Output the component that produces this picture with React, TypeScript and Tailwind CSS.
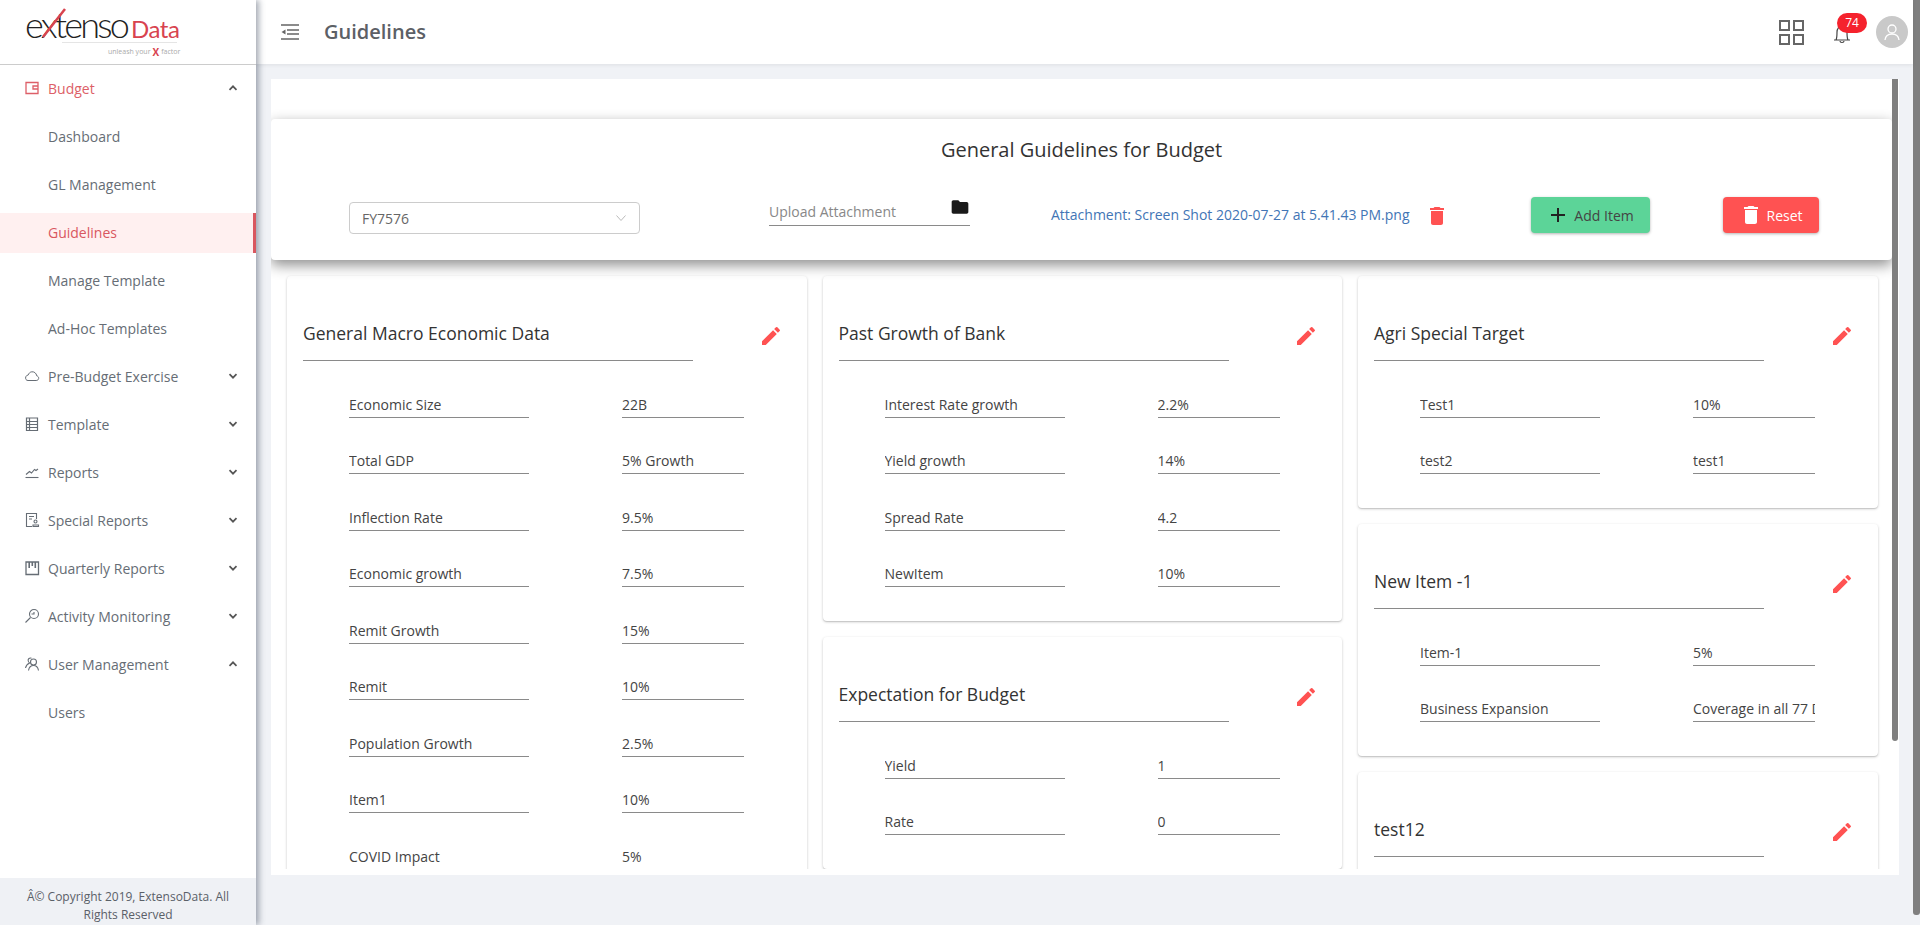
import { MdAdd, MdDelete, MdEdit, MdFolder } from "react-icons/md";

const ic = "w-[16px] h-[16px] shrink-0";

const BudgetIcon = () => (
  <svg viewBox="0 0 16 16" className={ic} fill="none" stroke="currentColor" strokeWidth="1.3">
    <path d="M2 2.5h12v11H2z" />
    <path d="M14 6H9v3h5" />
  </svg>
);
const CloudIcon = () => (
  <svg viewBox="0 0 16 16" className={ic} fill="none" stroke="currentColor" strokeWidth="1">
    <path d="M4 12.5h8.2c3 0 3.4-4 .6-4.6C12.300 5 10 3.500 7.800 3.800 6 4 4.800 5.300 4.300 6.900 .8 7.300 .6 12.500 4 12.500z" />
  </svg>
);
const TemplateIcon = () => (
  <svg viewBox="0 0 16 16" className={ic} fill="none" stroke="currentColor" strokeWidth="1.2">
    <path d="M2.500 2h11v12.500h-11z" />
    <path d="M2.500 5.500h11M2.500 8.500h11M2.500 11.500h11M5.500 2v12.500" />
  </svg>
);
const ReportsIcon = () => (
  <svg viewBox="0 0 16 16" className={ic} fill="none" stroke="currentColor" strokeWidth="1.1">
    <path d="M1.500 13.500h13" />
    <path d="M2 10.500l3.500-3 2 1.500 3-3.500 1.500 1 2-1.500" />
  </svg>
);
const SpecialIcon = () => (
  <svg viewBox="0 0 16 16" className={ic} fill="none" stroke="currentColor" strokeWidth="1.1">
    <path d="M8 14.500H2.500v-13h10V7" />
    <path d="M5 4.500h5M5 7h3" />
    <circle cx="11.500" cy="9.500" r="1.500" />
    <path d="M9 14.500v-1.500h5.500v1.500z" />
  </svg>
);
const QuarterlyIcon = () => (
  <svg viewBox="0 0 16 16" className={ic} fill="none" stroke="currentColor" strokeWidth="1.300">
    <path d="M2 2h12.500v12.500H2z" />
    <path d="M5.200 2v6M8.300 2v4M11.300 2v6" strokeWidth="1.600" />
  </svg>
);
const ActivityIcon = () => (
  <svg viewBox="0 0 16 16" className={ic} fill="none" stroke="currentColor" strokeWidth="1.100">
    <circle cx="10" cy="6" r="4.500" />
    <path d="M6.500 9.500L1.500 14.500" />
    <path d="M7.500 6h2.500V4" />
  </svg>
);
const UsersIcon = () => (
  <svg viewBox="0 0 16 16" className={ic} fill="none" stroke="currentColor" strokeWidth="1.100">
    <circle cx="9.500" cy="6" r="3" />
    <path d="M4.500 14.500c.5-3 2.500-5 5-5s4.500 2 5 5" />
    <path d="M7.500 2.200C5.500 1.300 3.800 3 4.200 5c.2 1 .8 1.600 1.500 2C3.500 7.800 2 9.800 1.500 12" />
  </svg>
);

const Chevron = ({ up }: { up?: boolean }) => (
  <svg viewBox="0 0 10 10" className={`w-[10px] h-[10px] ${up ? "rotate-180" : ""}`} fill="none" stroke="#555" strokeWidth="1.700">
    <path d="M1.500 3.200L5 6.700l3.500-3.500" />
  </svg>
);

const nav = [
  { label: "Budget", icon: <BudgetIcon />, chevron: "up", active: true },
  { label: "Dashboard", sub: true },
  { label: "GL Management", sub: true },
  { label: "Guidelines", sub: true, current: true },
  { label: "Manage Template", sub: true },
  { label: "Ad-Hoc Templates", sub: true },
  { label: "Pre-Budget Exercise", icon: <CloudIcon />, chevron: "down" },
  { label: "Template", icon: <TemplateIcon />, chevron: "down" },
  { label: "Reports", icon: <ReportsIcon />, chevron: "down" },
  { label: "Special Reports", icon: <SpecialIcon />, chevron: "down" },
  { label: "Quarterly Reports", icon: <QuarterlyIcon />, chevron: "down" },
  { label: "Activity Monitoring", icon: <ActivityIcon />, chevron: "down" },
  { label: "User Management", icon: <UsersIcon />, chevron: "up" },
  { label: "Users", sub: true },
];

const Logo = () => (
  <div className="relative w-[160px] h-[56px] ml-[25px] mt-[4px]">
    <div className="flex items-baseline h-[40px] leading-[40px] font-['Lato',sans-serif] whitespace-nowrap">
      <span className="text-[#222] font-light text-[36px] tracking-[-2.800px]">extenso</span>
      <span className="text-[#d8434f] ml-[4px] text-[24px] tracking-[-0.5px]">Data</span>
    </div>
    <svg viewBox="0 0 30 40" className="absolute left-[16px] top-[3px] w-[30px] h-[40px]">
      <path d="M2 30L24 2" stroke="#d8434f" strokeWidth="2.500" />
    </svg>
    <div className="absolute left-[37px] w-[115px] top-[38px] border-t border-[#e5e5e5]" />
    <div className="absolute left-[83px] top-[42px] text-[7px] leading-[11px] text-[#aaa] flex items-center gap-[2px] whitespace-nowrap">
      <span>unleash your</span>
      <span className="text-[#d8434f] font-bold text-[10px] leading-[10px]">X</span>
      <span>factor</span>
    </div>
  </div>
);

const Sidebar = () => (
  <aside className="relative z-20 w-[256px] shrink-0 h-full bg-white flex flex-col shadow-[3px_0_6px_rgba(60,70,90,0.45)]">
    <div className="h-[65px] border-b border-[#ccc] shrink-0">
      <Logo />
    </div>
    <nav className="flex-1 -mt-[1px]">
      {nav.map((item) => (
        <div key={item.label} className="h-[48px] flex items-center">
          <div
            className={`w-full h-[40px] mt-[1px] pb-[1px] flex items-center text-[14px] ${item.current ? "bg-[#fff0f0] border-r-[3px] border-[#d9575f] text-[#d9575f]" : item.active ? "text-[#dd5f68]" : "text-[#666d75]"}`}
          >
            {item.sub ? (
              <span className="pl-[48px]">{item.label}</span>
            ) : (
              <>
                <span className="w-[48px] pl-[24px]">{item.icon}</span>
                <span className="flex-1">{item.label}</span>
                <span className="pr-[18px]">
                  <Chevron up={item.chevron === "up"} />
                </span>
              </>
            )}
          </div>
        </div>
      ))}
    </nav>
    <div className="h-[47px] bg-[#eff1f5] text-[12px] leading-[18px] text-[#5a6068] text-center px-[20px] pt-[10px]">
      Â© Copyright 2019, ExtensoData. All Rights Reserved
    </div>
  </aside>
);

const Header = () => (
  <header className="relative z-10 h-[64px] shrink-0 bg-white shadow-[0_1px_4px_rgba(0,0,0,0.08)] flex items-center pl-[25px] pr-[5px]">
    <svg viewBox="0 0 18 16" className="w-[18px] h-[16px]" fill="none" stroke="#666" strokeWidth="1.500">
      <path d="M0 1h18M6 6h12M6 10h12M0 15h18" />
      <path d="M4.500 5.500v5L.5 8z" fill="#666" stroke="none" />
    </svg>
    <h1 className="ml-[25px] text-[20px] font-semibold text-[#5c6066]">Guidelines</h1>
    <div className="ml-auto flex items-center">
      <svg viewBox="0 0 25 25" className="w-[25px] h-[25px]" fill="none" stroke="#666" strokeWidth="2">
        <path d="M1 1h9v9H1zM15 1h9v9h-9zM1 15h9v9H1zM15 15h9v9h-9z" />
      </svg>
      <div className="relative ml-[29px] w-[18px] h-[24px]">
        <svg viewBox="0 0 18 24" className="w-[18px] h-[24px]" fill="none" stroke="#444" strokeWidth="1.200">
          <path d="M1 20h16M3 20c1-2 1-4 1-8 0-3 2-6 5-6s5 3 5 6c0 4 0 6 1 8" />
          <path d="M7 21c0 2 4 2 4 0" />
        </svg>
        <span className="absolute left-[4px] top-[-7px] w-[30px] h-[20px] rounded-full bg-[#f5222d] text-white text-[12px] leading-[20px] text-center">
          74
        </span>
      </div>
      <div className="ml-[25px] w-[32px] h-[32px] rounded-full bg-[#c9c9c9] flex items-center justify-center">
        <svg viewBox="0 0 20 20" className="w-[20px] h-[20px]" fill="none" stroke="#fff" strokeWidth="1.300">
          <circle cx="10" cy="7" r="4" />
          <path d="M3 18c.5-4 3-6 7-6s6.500 2 7 6" />
        </svg>
      </div>
    </div>
  </header>
);

const Row = ({ label, value }: { label: string; value: string }) => (
  <div className="h-[56.5px] pl-[62px] flex items-end text-[14px] leading-[20px] text-[#444]">
    <div className="w-[180px] pb-[2px] border-b border-[#8a8a8a] whitespace-nowrap overflow-hidden">{label}</div>
    <div className="ml-[93px] w-[122px] pb-[2px] border-b border-[#8a8a8a] whitespace-nowrap overflow-hidden">{value}</div>
  </div>
);

const Card = ({ title, rows }: { title: string; rows: [string, string][] }) => (
  <div className="bg-white rounded-[4px] shadow-[0_1px_3px_rgba(0,0,0,0.2),0_1px_1px_rgba(0,0,0,0.1)] pb-[34px]">
    <div className="flex pt-[45px] pl-[16px] pr-[24px]">
      <div className="w-[390px] h-[40px] border-b border-[#8a8a8a] text-[17.5px] leading-[24px] text-[#333]">{title}</div>
      <MdEdit className="ml-auto mt-[3px] text-[#ff5252]" size={24} />
    </div>
    {rows.map(([label, value]) => (
      <Row key={label} label={label} value={value} />
    ))}
  </div>
);

const macro: [string, string][] = [
  ["Economic Size", "22B"],
  ["Total GDP", "5% Growth"],
  ["Inflection Rate", "9.5%"],
  ["Economic growth", "7.5%"],
  ["Remit Growth", "15%"],
  ["Remit", "10%"],
  ["Population Growth", "2.5%"],
  ["Item1", "10%"],
  ["COVID Impact", "5%"],
];

const Toolbar = () => (
  <div className="relative z-10 h-[141px] bg-white rounded-[4px] shadow-[0_5px_14px_rgba(0,0,0,0.45)]">
    <h2 className="pt-[17px] text-center text-[20px] leading-[28px] text-[#333]">General Guidelines for Budget</h2>
    <div className="flex items-start mt-[33px] text-[14px]">
      <div className="ml-[78px] mt-[5px] w-[291px] h-[32px] border border-[#ccc] rounded-[4px] flex items-center justify-between px-[12px] text-[#666]">
        FY7576
        <svg viewBox="0 0 12 12" className="w-[12px] h-[12px]" fill="none" stroke="#bbb" strokeWidth="1">
          <path d="M1.500 3.500L6 8.500l4.500-5" />
        </svg>
      </div>
      <div className="ml-[129px] w-[201px] h-[29px] border-b border-[#8a8a8a] flex justify-between text-[#888]">
        <span className="pt-[4px]">Upload Attachment</span>
        <MdFolder className="text-[#1a1a1a]" size={20} />
      </div>
      <a className="ml-[81px] mt-[7px] text-[#4275b5] whitespace-nowrap">Attachment: Screen Shot 2020-07-27 at 5.41.43 PM.png</a>
      <MdDelete className="ml-[15px] mt-[7px] text-[#ff5252]" size={24} />
      <button className="ml-[82px] w-[119px] h-[36px] bg-[#5cd498] rounded-[4px] shadow-[0_1px_3px_rgba(0,0,0,0.3)] flex items-center justify-center gap-[4px] text-[#444]">
        <MdAdd className="text-[#222]" size={24} />
        Add Item
      </button>
      <button className="ml-[73px] w-[96px] h-[36px] bg-[#ff5252] rounded-[4px] shadow-[0_1px_3px_rgba(0,0,0,0.3)] flex items-center justify-center gap-[4px] text-white">
        <MdDelete size={24} />
        Reset
      </button>
    </div>
  </div>
);

export default function App() {
  return (
    <div className="h-[925px] flex overflow-hidden bg-[#f0f2f6] font-['Open_Sans',sans-serif]">
      <Sidebar />
      <main className="flex-1 min-w-0 flex flex-col">
        <Header />
        <div className="flex-1 min-h-0 pt-[15px] pl-[15px] pr-[14px] pb-[50px]">
          <div className="h-full bg-white flex pb-[6px]">
            <div className="flex-1 min-w-0 overflow-hidden pt-[40px]">
              <Toolbar />
              <div className="flex gap-[16px] mt-[16px] pl-[16px]">
                <div className="w-[519.5px] shrink-0 flex flex-col gap-[16px]">
                  <Card title="General Macro Economic Data" rows={macro} />
                </div>
                <div className="w-[519.5px] shrink-0 flex flex-col gap-[16px]">
                  <Card
                    title="Past Growth of Bank"
                    rows={[
                      ["Interest Rate growth", "2.2%"],
                      ["Yield growth", "14%"],
                      ["Spread Rate", "4.2"],
                      ["NewItem", "10%"],
                    ]}
                  />
                  <Card
                    title="Expectation for Budget"
                    rows={[
                      ["Yield", "1"],
                      ["Rate", "0"],
                    ]}
                  />
                </div>
                <div className="w-[519.5px] shrink-0 flex flex-col gap-[16px]">
                  <Card
                    title="Agri Special Target"
                    rows={[
                      ["Test1", "10%"],
                      ["test2", "test1"],
                    ]}
                  />
                  <Card
                    title="New Item -1"
                    rows={[
                      ["Item-1", "5%"],
                      ["Business Expansion", "Coverage in all 77 Districts"],
                    ]}
                  />
                  <Card title="test12" rows={[]} />
                </div>
              </div>
            </div>
            <div className="w-[7px] shrink-0">
              <div className="w-[6px] h-[662px] bg-[#7f7f7f] rounded-b-[3px]" />
            </div>
          </div>
        </div>
      </main>
      <div className="w-[7px] shrink-0 bg-[#f0f2f6]">
        <div className="w-[7px] h-[915px] bg-[#7f7f7f] rounded-b-[3px]" />
      </div>
    </div>
  );
}
